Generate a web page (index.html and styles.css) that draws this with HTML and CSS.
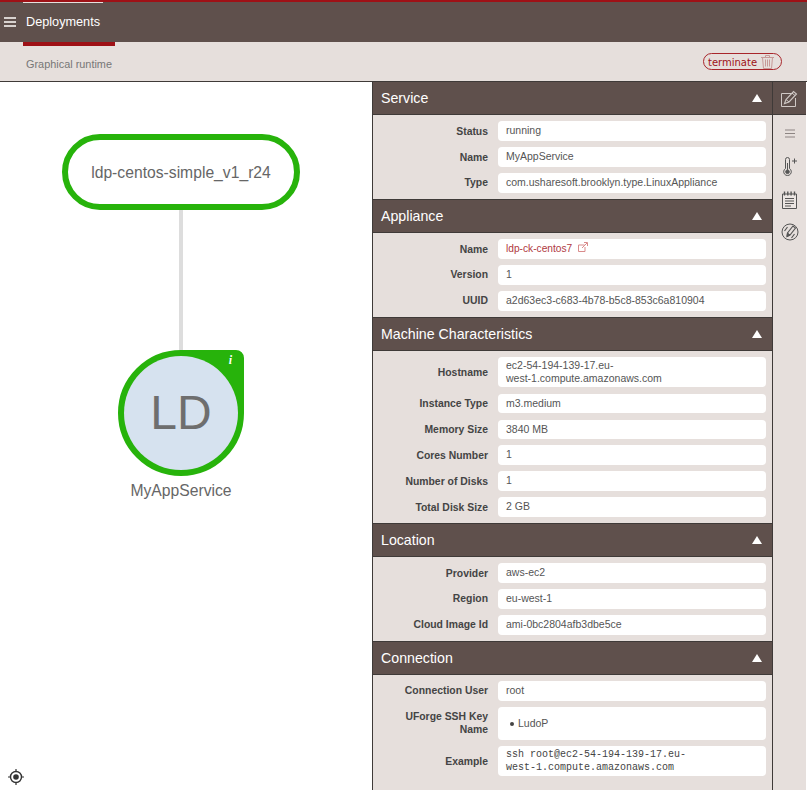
FILE: index.html
```html
<!DOCTYPE html>
<html lang="en">
<head>
    <meta charset="UTF-8">
    <title>Deployments</title>
    <link rel="stylesheet" href="styles.css">
</head>
<body>
    <div class="topbar">
        <svg class="menu" width="12" height="10" viewBox="0 0 12 10"><path d="M0 1h12M0 5h12M0 9h12" stroke="#d8d2cf" stroke-width="2"/></svg>
        <div class="tab">Deployments</div>
    </div>
    <div class="subbar">
        <span class="subtitle">Graphical runtime</span>
        <div class="terminate">
            <span>terminate</span>
            <svg width="13" height="14" viewBox="0 0 13 14" fill="none" stroke="#c79a98" stroke-width="1"><path d="M0 2.500h13M4.500 2.500V.5h4v2M1.500 2.500l1 11h8l1-11M4.500 4.500v7M6.500 4.500v7M8.500 4.500v7"/></svg>
        </div>
    </div>

    <div class="main">
        <div class="graph">
            <div class="pill">ldp-centos-simple_v1_r24</div>
            <div class="link"></div>
            <div class="node">
                <span>LD</span>
                <i class="info">i</i>
            </div>
            <div class="node-name">MyAppService</div>
            <svg class="target" width="18" height="18" viewBox="0 0 18 18" fill="none" stroke="#333"><circle cx="9" cy="9" r="5.500" stroke-width="1.400"/><circle cx="9" cy="9" r="2.800" fill="#333" stroke="none"/><path d="M9 1v2.500M9 14.500V17M1 9h2.500M14.500 9H17" stroke-width="1.200"/></svg>
        </div>

        <div class="panel">
            <h2 class="head">Service<b class="arrow"></b></h2>
            <div class="rows">
                <div class="row"><label>Status</label><div class="val">running</div></div>
                <div class="row"><label>Name</label><div class="val">MyAppService</div></div>
                <div class="row"><label>Type</label><div class="val">com.usharesoft.brooklyn.type.LinuxAppliance</div></div>
            </div>

            <h2 class="head">Appliance<b class="arrow"></b></h2>
            <div class="rows">
                <div class="row"><label>Name</label><div class="val"><a class="ext">ldp-ck-centos7</a>
                    <svg width="10" height="10" viewBox="0 0 10 10" fill="none" stroke="#d98b8b"><path d="M6.500 3H.5v6.500H7V5M4 6l5-5M6 .5h3.500V4"/></svg></div></div>
                <div class="row"><label>Version</label><div class="val">1</div></div>
                <div class="row"><label>UUID</label><div class="val">a2d63ec3-c683-4b78-b5c8-853c6a810904</div></div>
            </div>

            <h2 class="head">Machine Characteristics<b class="arrow"></b></h2>
            <div class="rows">
                <div class="row"><label>Hostname</label><div class="val tall">ec2-54-194-139-17.eu-<br>west-1.compute.amazonaws.com</div></div>
                <div class="row"><label>Instance Type</label><div class="val">m3.medium</div></div>
                <div class="row"><label>Memory Size</label><div class="val">3840 MB</div></div>
                <div class="row"><label>Cores Number</label><div class="val">1</div></div>
                <div class="row"><label>Number of Disks</label><div class="val">1</div></div>
                <div class="row"><label>Total Disk Size</label><div class="val">2 GB</div></div>
            </div>

            <h2 class="head">Location<b class="arrow"></b></h2>
            <div class="rows">
                <div class="row"><label>Provider</label><div class="val">aws-ec2</div></div>
                <div class="row"><label>Region</label><div class="val">eu-west-1</div></div>
                <div class="row"><label>Cloud Image Id</label><div class="val">ami-0bc2804afb3dbe5ce</div></div>
            </div>

            <h2 class="head">Connection<b class="arrow"></b></h2>
            <div class="rows">
                <div class="row"><label>Connection User</label><div class="val">root</div></div>
                <div class="row"><label>UForge SSH Key Name</label><div class="val key"><ul><li>LudoP</li></ul></div></div>
                <div class="row"><label>Example</label><div class="val tall mono">ssh root@ec2-54-194-139-17.eu-<br>west-1.compute.amazonaws.com</div></div>
            </div>
        </div>

        <div class="side">
            <div class="side-top">
                <svg width="17" height="17" viewBox="0 0 17 17" fill="none" stroke="#cfc8c5"><path d="M12 3.500H.5v13h14V8"/><path d="M3.500 13.500l1.500-4 7.500-8 3 2.500-7.500 8z" stroke-width="1.100"/><path d="M5 9.500l3 2.500M11 3l3 2.500"/></svg>
            </div>
            <div class="tools">
                <svg class="tool-menu" width="10" height="9" viewBox="0 0 10 9"><path d="M0 1h10M0 4.500h10M0 8h10" stroke="#8d8583" stroke-width="1.200"/></svg>
                <svg width="14" height="20" viewBox="0 0 14 20" fill="none" stroke="#555"><path d="M2.500 11.500V2.500a2 2 0 0 1 4 0v9a3.800 3.800 0 1 1-4 0z"/><circle cx="4.500" cy="14.800" r="1.800" fill="#555"/><path d="M4.500 6v7M9 4h5M11.500 1.500v5"/></svg>
                <svg width="15" height="18" viewBox="0 0 15 18" fill="none" stroke="#555"><path d="M.5 3h14v14.500H.5z" fill="#ece6e3"/><path d="M2.500 .5v4M5.800 .5v4M9.100 .5v4M12.500 .5v4" stroke-width="1.400"/><path d="M3 7.500h9M3 10h9M3 12.500h9M3 15h6" stroke-width="1.100"/></svg>
                <svg width="18" height="18" viewBox="0 0 18 18" fill="none" stroke="#555"><circle cx="9" cy="9" r="8"/><path d="M6 13.500l.5-3.500 5.500-7 2.500 2-5.500 7z" stroke-width="1.100"/><path d="M6 13.500l.5-3.500 2.500 2z" fill="#555"/><path d="M3.500 8l3-4M10.500 15l3-4" stroke-width="1.200"/></svg>
            </div>
        </div>
    </div>
</body>
</html>
```

FILE: styles.css
```css
* {
    margin: 0;
    padding: 0;
    box-sizing: border-box;
}

html, body {
    height: 790px;
    overflow: hidden;
}

body {
    font-family: "Liberation Sans", sans-serif;
    background-color: #fff;
    color: #555;
}

.topbar {
    height: 42px;
    background-color: #5f504c;
    border-top: 2px solid #9e1116;
    display: flex;
    align-items: center;
    padding-left: 4px;
}

.tab {
    align-self: stretch;
    width: 80px;
    margin-left: 7px;
    padding-left: 3px;
    border-top: 1px solid #e6dfdc;
    color: #fff;
    font-size: 12.700px;
    line-height: 38px;
}

.subbar {
    height: 40px;
    background-color: #e6dfdc;
    border-bottom: 1px solid #3f3a38;
    display: flex;
    justify-content: space-between;
    padding: 11px 25px 0 26px;
    position: relative;
}

.subbar::before {
    content: "";
    position: absolute;
    left: 23px;
    top: 0;
    width: 92px;
    height: 4px;
    background-color: #9e1116;
}

.subtitle {
    font-size: 10.900px;
    line-height: 22px;
    color: #777;
}

.terminate {
    width: 79px;
    height: 17px;
    border: 1px solid #a8262b;
    border-radius: 9px;
    display: flex;
    align-items: center;
    gap: 4px;
    padding-left: 4px;
    font-family: "DejaVu Sans", sans-serif;
    font-size: 10px;
    color: #9e1116;
}

.terminate span {
    padding-top: 1px;
}

.main {
    display: flex;
    height: 708px;
}

.graph {
    width: 372px;
    position: relative;
    display: flex;
    flex-direction: column;
    align-items: center;
    padding: 52px 10px 0 0;
}

.pill {
    width: 238px;
    height: 76px;
    border: 6px solid #27b30b;
    border-radius: 38px;
    text-align: center;
    font-size: 15.700px;
    line-height: 65px;
    color: #666;
}

.link {
    width: 4px;
    height: 140px;
    background-color: #ddd;
}

.node {
    width: 126px;
    height: 126px;
    border: 6px solid #27b30b;
    border-radius: 50% 8px 50% 50%;
    position: relative;
    display: flex;
    align-items: center;
    justify-content: center;
    background-color: #27b30b;
}

.node span {
    width: 114px;
    height: 114px;
    border-radius: 50%;
    background-color: #d6e2ef;
    text-align: center;
    font-size: 48px;
    line-height: 114px;
    color: #6e6e6e;
}

.info {
    position: absolute;
    top: -3px;
    right: 6px;
    font-family: "Liberation Serif", serif;
    font-weight: bold;
    font-size: 12px;
    line-height: 14px;
    color: #fff;
}

.node-name {
    margin-top: 5px;
    font-size: 15.700px;
    line-height: 20px;
    color: #666;
}

.target {
    position: absolute;
    left: 7px;
    bottom: 4px;
}

.panel {
    width: 401px;
    background-color: #e6dfdc;
    border-left: 1px solid #3f3a38;
    border-right: 1px solid #3f3a38;
}

.head {
    height: 33px;
    background-color: #5f504c;
    border-bottom: 1px solid #3f3a38;
    padding: 0 10px 0 8px;
    display: flex;
    align-items: center;
    justify-content: space-between;
    font-size: 14.200px;
    font-weight: normal;
    color: #fff;
}

.arrow {
    width: 0;
    height: 0;
    border-left: 5px solid transparent;
    border-right: 5px solid transparent;
    border-bottom: 8px solid #fff;
}

.rows {
    display: flex;
    flex-direction: column;
    gap: 6.400px;
    padding: 6.400px 6px 6.200px 0;
    border-bottom: 1px solid #3f3a38;
}

.rows:last-child {
    border-bottom: none;
}

.row {
    display: grid;
    grid-template-columns: 115px 268px;
    column-gap: 10px;
    align-items: center;
}

.row label {
    padding-left: 28px;
    text-align: right;
    font-size: 10.400px;
    font-weight: bold;
    line-height: 13px;
    color: #444;
}

.val {
    min-height: 19.500px;
    background-color: #fff;
    border-radius: 4px;
    padding: 3px 8px;
    font-size: 10.500px;
    line-height: 13px;
    color: #555;
}

.val svg {
    margin-left: 3px;
}

.ext {
    font-size: 10.200px;
    color: #b03a3f;
}

.tall {
    min-height: 30.200px;
    padding: 2px 8px;
}

.key {
    height: 32.500px;
    padding-top: 10px;
}

.key ul {
    list-style: none;
    padding-left: 4px;
}

.key li {
    display: flex;
    align-items: center;
    gap: 4px;
}

.key li::before {
    content: "";
    width: 4px;
    height: 4px;
    border-radius: 50%;
    background-color: #444;
}

.mono {
    font-family: "Liberation Mono", monospace;
    font-size: 10px;
    color: #444;
}

.side {
    width: 33px;
    background-color: #e6dfdc;
}

.side-top {
    height: 33px;
    background-color: #5f504c;
    border-bottom: 1px solid #3f3a38;
    display: flex;
    align-items: center;
    justify-content: center;
}

.tools {
    display: flex;
    flex-direction: column;
    align-items: center;
    gap: 14px;
    padding-top: 14px;
}

.tool-menu {
    margin-bottom: 5px;
}
```
